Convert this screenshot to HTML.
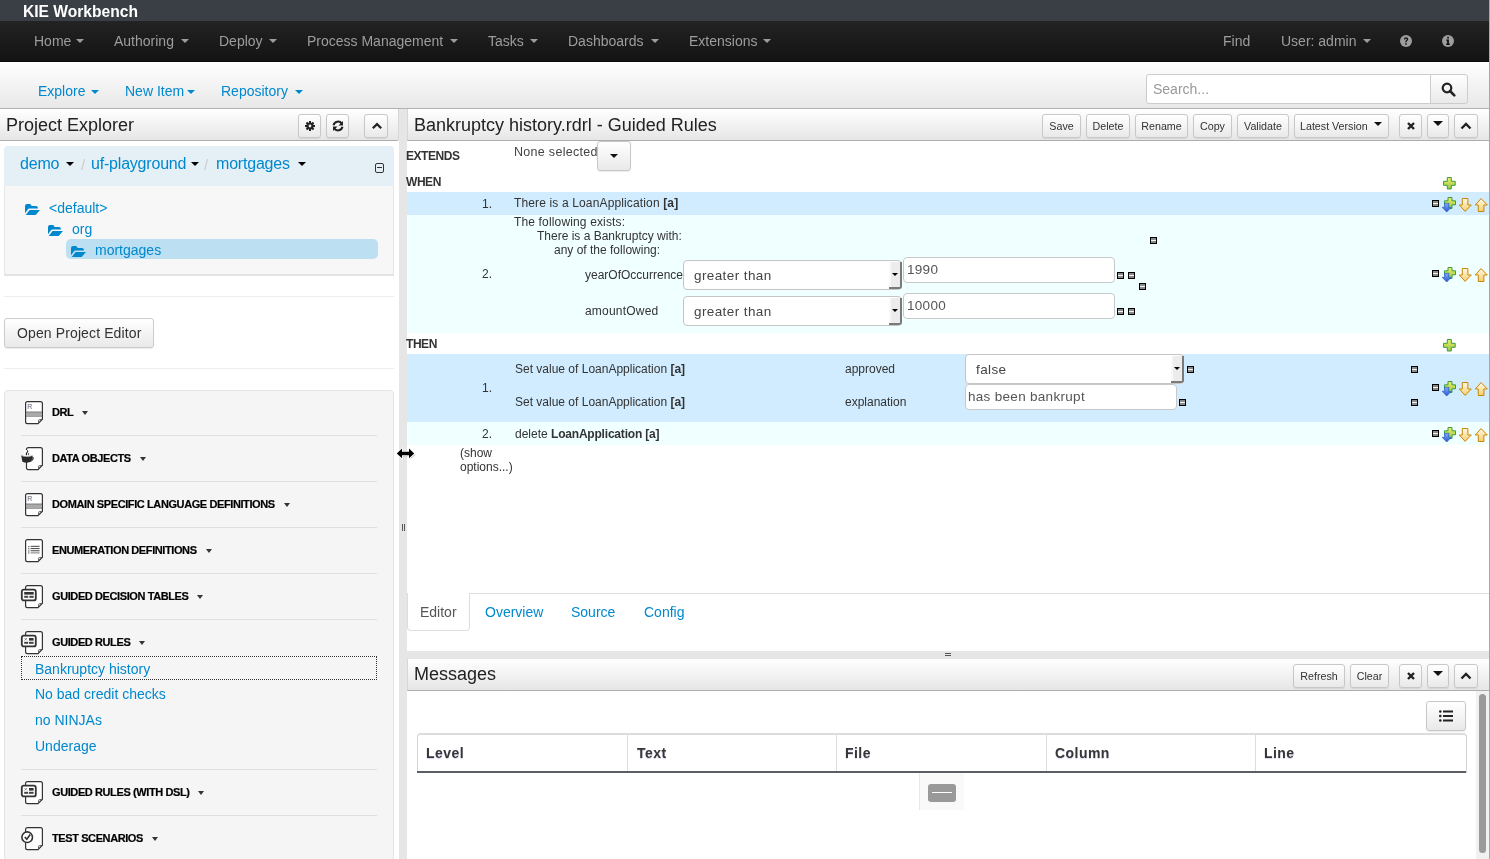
<!DOCTYPE html>
<html><head><meta charset="utf-8">
<style>
*{box-sizing:border-box;margin:0;padding:0}
html,body{width:1490px;height:859px;overflow:hidden;background:#fff;font-family:"Liberation Sans",sans-serif;color:#333}
.a{position:absolute}
.t{position:absolute;line-height:1;white-space:nowrap;will-change:transform}
.btn{position:absolute;border:1px solid #c8c8c8;border-radius:3px;background:linear-gradient(#fff,#e9e9e9);box-shadow:0 1px 1px rgba(0,0,0,.08)}
.rm{position:absolute;width:7px;height:7px;background:#000}
.rm:after{content:"";position:absolute;left:1px;top:1px;width:5px;height:5px;background:linear-gradient(#8a8a8a 0,#8a8a8a 2px,#f4f4f4 2px,#f4f4f4 3px,#8a8a8a 3px)}
</style></head><body>
<div class="a" style="left:0px;top:0px;width:1490px;height:21px;background:#393f45"></div>
<div class="t" style="left:23.00px;top:4.49px;font-size:15.60px;color:#fff;font-weight:bold">KIE Workbench</div>
<div class="a" style="left:0px;top:21px;width:1490px;height:41px;background:linear-gradient(#232323,#131313);border-bottom:1px solid #0a0a0a"></div>
<div class="t" style="left:33.80px;top:34.25px;font-size:14.00px;color:#9d9d9d;">Home</div>
<div class="t" style="left:113.80px;top:34.25px;font-size:14.00px;color:#9d9d9d;">Authoring</div>
<div class="t" style="left:218.80px;top:34.25px;font-size:14.00px;color:#9d9d9d;">Deploy</div>
<div class="t" style="left:306.80px;top:34.25px;font-size:14.00px;color:#9d9d9d;">Process Management</div>
<div class="t" style="left:487.80px;top:34.25px;font-size:14.00px;color:#9d9d9d;">Tasks</div>
<div class="t" style="left:567.80px;top:34.25px;font-size:14.00px;color:#9d9d9d;">Dashboards</div>
<div class="t" style="left:688.80px;top:34.25px;font-size:14.00px;color:#9d9d9d;">Extensions</div>
<div class="t" style="left:1222.80px;top:34.25px;font-size:14.00px;color:#9d9d9d;">Find</div>
<div class="t" style="left:1280.80px;top:34.25px;font-size:14.00px;color:#9d9d9d;">User: admin</div>
<div class="a" style="left:76px;top:39px;width:0;height:0;border-top:4px solid #9d9d9d;border-left:4.0px solid transparent;border-right:4.0px solid transparent"></div>
<div class="a" style="left:181px;top:39px;width:0;height:0;border-top:4px solid #9d9d9d;border-left:4.0px solid transparent;border-right:4.0px solid transparent"></div>
<div class="a" style="left:269px;top:39px;width:0;height:0;border-top:4px solid #9d9d9d;border-left:4.0px solid transparent;border-right:4.0px solid transparent"></div>
<div class="a" style="left:450px;top:39px;width:0;height:0;border-top:4px solid #9d9d9d;border-left:4.0px solid transparent;border-right:4.0px solid transparent"></div>
<div class="a" style="left:530px;top:39px;width:0;height:0;border-top:4px solid #9d9d9d;border-left:4.0px solid transparent;border-right:4.0px solid transparent"></div>
<div class="a" style="left:651px;top:39px;width:0;height:0;border-top:4px solid #9d9d9d;border-left:4.0px solid transparent;border-right:4.0px solid transparent"></div>
<div class="a" style="left:762.5px;top:39px;width:0;height:0;border-top:4px solid #9d9d9d;border-left:4.0px solid transparent;border-right:4.0px solid transparent"></div>
<div class="a" style="left:1362.5px;top:39px;width:0;height:0;border-top:4px solid #9d9d9d;border-left:4.0px solid transparent;border-right:4.0px solid transparent"></div>
<div class="a" style="left:0px;top:62px;width:1490px;height:47px;background:linear-gradient(#fff,#e8e8e8);border-bottom:1px solid #b2b2b2"></div>
<div class="t" style="left:37.70px;top:84.35px;font-size:14.00px;color:#0088ce;">Explore</div>
<div class="t" style="left:124.70px;top:84.35px;font-size:14.00px;color:#0088ce;">New Item</div>
<div class="t" style="left:220.70px;top:84.35px;font-size:14.00px;color:#0088ce;">Repository</div>
<div class="a" style="left:91px;top:90px;width:0;height:0;border-top:4px solid #0088ce;border-left:4.0px solid transparent;border-right:4.0px solid transparent"></div>
<div class="a" style="left:187px;top:90px;width:0;height:0;border-top:4px solid #0088ce;border-left:4.0px solid transparent;border-right:4.0px solid transparent"></div>
<div class="a" style="left:295px;top:90px;width:0;height:0;border-top:4px solid #0088ce;border-left:4.0px solid transparent;border-right:4.0px solid transparent"></div>
<div class="a" style="left:1146px;top:74px;width:285px;height:30px;background:#fff;border:1px solid #ccc;border-radius:3px 0 0 3px"></div>
<div class="t" style="left:1153.00px;top:82.05px;font-size:14.00px;color:#999;">Search...</div>
<div class="a" style="left:1430px;top:74px;width:38px;height:30px;background:linear-gradient(#fff,#e9e9e9);border:1px solid #ccc;border-radius:0 3px 3px 0"></div>
<svg class="a" style="left:1441px;top:82px" width="15" height="15" viewBox="0 0 15 15"><circle cx="6" cy="6" r="4.3" fill="none" stroke="#222" stroke-width="2.2"/><path d="M9 9 L13.3 13.3" stroke="#222" stroke-width="2.6" stroke-linecap="round"/></svg>
<svg class="a" style="left:1399px;top:34px" width="14" height="14" viewBox="0 0 14 14"><circle cx="7" cy="7" r="6" fill="#9d9d9d"/><path d="M4.9 5.4 Q4.9 3.3 7 3.3 Q9.2 3.3 9.2 5.2 Q9.2 6.3 8 7 Q7.6 7.3 7.6 8.3 L6.3 8.3 Q6.3 6.8 7.1 6.2 Q7.8 5.7 7.8 5.2 Q7.8 4.5 7 4.5 Q6.2 4.5 6.2 5.4 Z" fill="#111"/><rect x="6.2" y="9.2" width="1.5" height="1.5" fill="#111"/></svg>
<svg class="a" style="left:1441px;top:34px" width="14" height="14" viewBox="0 0 14 14"><circle cx="7" cy="7" r="6" fill="#9d9d9d"/><rect x="6.2" y="2.8" width="1.7" height="1.7" fill="#111"/><path d="M5.2 5.5 H7.9 V9.6 H8.8 V10.9 H5.2 V9.6 H6.1 V6.8 H5.2 Z" fill="#111"/></svg>
<div class="a" style="left:0px;top:109px;width:399px;height:32px;background:linear-gradient(#fff,#e6e6e6);border-bottom:1px solid #adadad;border-right:1px solid #d6d6d6;border-radius:0 0 2px 0"></div>
<div class="t" style="left:5.50px;top:115.96px;font-size:18.00px;color:#222;">Project Explorer</div>
<div class="btn" style="left:298px;top:114px;width:23px;height:24px;"></div>
<svg class="a" style="left:303px;top:119px" width="14" height="14" viewBox="0 0 14 14"><g fill="#222"><circle cx="7" cy="7" r="3.6"/><rect x="6" y="2" width="2" height="10"/><rect x="2" y="6" width="10" height="2"/><rect x="6" y="2" width="2" height="10" transform="rotate(45 7 7)"/><rect x="6" y="2" width="2" height="10" transform="rotate(-45 7 7)"/></g><circle cx="7" cy="7" r="1.4" fill="#eee"/></svg>
<div class="btn" style="left:326px;top:114px;width:23px;height:24px;"></div>
<svg class="a" style="left:331px;top:119px" width="14" height="14" viewBox="0 0 14 14"><g fill="none" stroke="#222" stroke-width="2"><path d="M2.5 6.2 A4.6 4.6 0 0 1 10.8 4.6"/><path d="M11.5 7.8 A4.6 4.6 0 0 1 3.2 9.4"/></g><path d="M12 2 L12 6.5 L7.5 6.5 Z" fill="#222"/><path d="M2 12 L2 7.5 L6.5 7.5 Z" fill="#222"/></svg>
<div class="btn" style="left:364px;top:114px;width:24px;height:24px;"></div>
<svg class="a" style="left:370.5px;top:121px" width="12" height="10" viewBox="0 0 12 10"><path d="M1.8 7.3 L6 3.1 L10.2 7.3" fill="none" stroke="#222" stroke-width="2.2"/></svg>
<div class="a" style="left:4px;top:146px;width:390px;height:40px;background:#e4eff6;border-radius:4px 4px 0 0"></div>
<div class="t" style="left:19.80px;top:156.26px;font-size:16.00px;color:#0088ce;letter-spacing:-0.2px">demo</div>
<div class="t" style="left:91.00px;top:156.26px;font-size:16.00px;color:#0088ce;letter-spacing:-0.2px">uf-playground</div>
<div class="t" style="left:216.00px;top:156.26px;font-size:16.00px;color:#0088ce;letter-spacing:-0.2px">mortgages</div>
<div class="a" style="left:65.5px;top:161.7px;width:0;height:0;border-top:4.5px solid #000;border-left:4.5px solid transparent;border-right:4.5px solid transparent"></div>
<div class="a" style="left:190.5px;top:161.7px;width:0;height:0;border-top:4.5px solid #000;border-left:4.5px solid transparent;border-right:4.5px solid transparent"></div>
<div class="a" style="left:297.5px;top:161.7px;width:0;height:0;border-top:4.5px solid #000;border-left:4.5px solid transparent;border-right:4.5px solid transparent"></div>
<div class="t" style="left:81.00px;top:157.10px;font-size:15.00px;color:#ccc;">/</div>
<div class="t" style="left:204.00px;top:157.10px;font-size:15.00px;color:#ccc;">/</div>
<div class="a" style="left:375px;top:162.5px;width:9px;height:10px;border:1.3px solid #333;border-radius:2px"></div>
<div class="a" style="left:377px;top:167px;width:5px;height:1.4px;background:#333"></div>
<div class="a" style="left:4px;top:186px;width:390px;height:90px;background:#f7f7f7;border:1px solid #e6e6e6;border-top:none;border-bottom:2px solid #e3e3e3"></div>
<div class="a" style="left:66px;top:239px;width:312px;height:20px;background:#bcdff1;border-radius:5px"></div>
<svg class="a" style="left:24px;top:203px" width="17" height="13" viewBox="0 0 17 13"><path d="M1 3 Q1 1 3 1 L5.6 1 Q6.6 1 7.1 2 L7.6 3 L12 3 Q13.9 3 13.9 5 L13.9 5.6 L5.2 5.6 Q4.5 5.6 4 6.3 L1 10.2 Z" fill="#0088ce"/><path d="M5.6 7 L16 7 L11.6 12 L1.7 12 Z" fill="#0088ce"/></svg>
<svg class="a" style="left:47px;top:224px" width="17" height="13" viewBox="0 0 17 13"><path d="M1 3 Q1 1 3 1 L5.6 1 Q6.6 1 7.1 2 L7.6 3 L12 3 Q13.9 3 13.9 5 L13.9 5.6 L5.2 5.6 Q4.5 5.6 4 6.3 L1 10.2 Z" fill="#0088ce"/><path d="M5.6 7 L16 7 L11.6 12 L1.7 12 Z" fill="#0088ce"/></svg>
<svg class="a" style="left:70px;top:245px" width="17" height="13" viewBox="0 0 17 13"><path d="M1 3 Q1 1 3 1 L5.6 1 Q6.6 1 7.1 2 L7.6 3 L12 3 Q13.9 3 13.9 5 L13.9 5.6 L5.2 5.6 Q4.5 5.6 4 6.3 L1 10.2 Z" fill="#0088ce"/><path d="M5.6 7 L16 7 L11.6 12 L1.7 12 Z" fill="#0088ce"/></svg>
<div class="t" style="left:49.00px;top:201.15px;font-size:14.00px;color:#0088ce;">&lt;default&gt;</div>
<div class="t" style="left:72.00px;top:222.15px;font-size:14.00px;color:#0088ce;">org</div>
<div class="t" style="left:95.00px;top:243.15px;font-size:14.00px;color:#0088ce;">mortgages</div>
<div class="a" style="left:4px;top:296px;width:390px;height:1px;background:#eee"></div>
<div class="btn" style="left:4px;top:318px;width:150px;height:30px;border-color:#ccc"></div>
<div class="t" style="left:17.00px;top:326.35px;font-size:14.00px;color:#333;letter-spacing:0.12px">Open Project Editor</div>
<div class="a" style="left:4px;top:368px;width:390px;height:1px;background:#eee"></div>
<div class="a" style="left:4px;top:390px;width:390px;height:471px;background:#f5f5f5;border:1px solid #e3e3e3;border-radius:4px"></div>
<svg class="a" style="left:20px;top:400.6px" width="25" height="25" viewBox="0 0 25 25"><path d="M7.5 0.6 H20.5 Q22.4 0.6 22.4 2.5 V18.2 L18 22.6 H7.5 Q5.6 22.6 5.6 20.7 V2.5 Q5.6 0.6 7.5 0.6 Z" fill="#fff" stroke="#333" stroke-width="1.2"/><path d="M22 18.6 H19.6 Q18.6 18.6 18.6 19.6 V22" fill="none" stroke="#555" stroke-width="1"/><text x="7.2" y="7.6" font-size="7" font-family="Liberation Sans" fill="#666">R</text><rect x="6" y="10.6" width="16" height="1.1" fill="#666"/><rect x="6" y="12" width="16" height="2.2" fill="#aaa"/><rect x="6" y="14.5" width="16" height="1.1" fill="#666"/></svg>
<div class="t" style="left:52px;top:406.99px;font-size:11px;font-weight:bold;color:#000;letter-spacing:-0.4px;-webkit-text-stroke:0.2px #000">DRL<span style="display:inline-block;vertical-align:middle;margin-left:9px;position:relative;top:-0.5px;width:0;height:0;border-top:4px solid #333;border-left:3.7px solid transparent;border-right:3.7px solid transparent"></span></div>
<svg class="a" style="left:20px;top:446.6px" width="25" height="25" viewBox="0 0 25 25"><path d="M8 0.6 H20.5 Q22.4 0.6 22.4 2.5 V18.2 L18 22.6 H8.4 Q6.5 22.6 6.5 20.7 V2.5 Q6.5 0.6 8.4 0.6 Z" fill="#fff" stroke="#333" stroke-width="1.2"/><path d="M22 18.6 H19.6 Q18.6 18.6 18.6 19.6 V22" fill="none" stroke="#555" stroke-width="1"/><rect x="4" y="3" width="4" height="6" fill="#fff"/><path d="M1.2 8.6 Q7 10.2 12.6 8.4 L11.6 14.6 Q7 16.6 2.4 14.8 Z" fill="#2a2a2a"/><path d="M2.5 9 Q7 10 11.5 8.8" fill="none" stroke="#ddd" stroke-width="0.8"/><path d="M12.2 10 Q14.2 11 12 13.2" fill="none" stroke="#2a2a2a" stroke-width="1.3"/><path d="M6.8 8.2 Q5.6 7 7 5.6 Q8.2 4.6 7.4 3.4" fill="none" stroke="#222" stroke-width="1.1"/><path d="M8.8 8.2 Q7.8 7.3 8.8 6.2" fill="none" stroke="#222" stroke-width="0.9"/></svg>
<div class="t" style="left:52px;top:452.99px;font-size:11px;font-weight:bold;color:#000;letter-spacing:-0.4px;-webkit-text-stroke:0.2px #000">DATA OBJECTS<span style="display:inline-block;vertical-align:middle;margin-left:9px;position:relative;top:-0.5px;width:0;height:0;border-top:4px solid #333;border-left:3.7px solid transparent;border-right:3.7px solid transparent"></span></div>
<svg class="a" style="left:20px;top:492.6px" width="25" height="25" viewBox="0 0 25 25"><path d="M7.5 0.6 H20.5 Q22.4 0.6 22.4 2.5 V18.2 L18 22.6 H7.5 Q5.6 22.6 5.6 20.7 V2.5 Q5.6 0.6 7.5 0.6 Z" fill="#fff" stroke="#333" stroke-width="1.2"/><path d="M22 18.6 H19.6 Q18.6 18.6 18.6 19.6 V22" fill="none" stroke="#555" stroke-width="1"/><text x="7.2" y="7.6" font-size="7" font-family="Liberation Sans" fill="#666">R</text><rect x="6" y="10.6" width="16" height="1.1" fill="#666"/><rect x="6" y="12" width="16" height="2.2" fill="#aaa"/><rect x="6" y="14.5" width="16" height="1.1" fill="#666"/></svg>
<div class="t" style="left:52px;top:498.99px;font-size:11px;font-weight:bold;color:#000;letter-spacing:-0.4px;-webkit-text-stroke:0.2px #000">DOMAIN SPECIFIC LANGUAGE DEFINITIONS<span style="display:inline-block;vertical-align:middle;margin-left:9px;position:relative;top:-0.5px;width:0;height:0;border-top:4px solid #333;border-left:3.7px solid transparent;border-right:3.7px solid transparent"></span></div>
<svg class="a" style="left:20px;top:538.6px" width="25" height="25" viewBox="0 0 25 25"><path d="M7.5 0.6 H20.5 Q22.4 0.6 22.4 2.5 V18.2 L18 22.6 H7.5 Q5.6 22.6 5.6 20.7 V2.5 Q5.6 0.6 7.5 0.6 Z" fill="#fff" stroke="#333" stroke-width="1.2"/><path d="M22 18.6 H19.6 Q18.6 18.6 18.6 19.6 V22" fill="none" stroke="#555" stroke-width="1"/><g fill="#555"><rect x="8.2" y="7" width="1.2" height="1.2"/><rect x="8.2" y="9.2" width="1.2" height="1.2"/><rect x="8.2" y="11.4" width="1.2" height="1.2"/><rect x="8.2" y="13.4" width="1.2" height="1.2"/><rect x="10.6" y="6.8" width="9" height="1.1"/><rect x="10.6" y="9" width="9" height="1.1"/><rect x="10.6" y="11.2" width="9" height="1.1"/></g><rect x="10.6" y="13.2" width="9" height="1.3" fill="#999"/></svg>
<div class="t" style="left:52px;top:544.99px;font-size:11px;font-weight:bold;color:#000;letter-spacing:-0.4px;-webkit-text-stroke:0.2px #000">ENUMERATION DEFINITIONS<span style="display:inline-block;vertical-align:middle;margin-left:9px;position:relative;top:-0.5px;width:0;height:0;border-top:4px solid #333;border-left:3.7px solid transparent;border-right:3.7px solid transparent"></span></div>
<svg class="a" style="left:20px;top:584.6px" width="25" height="25" viewBox="0 0 25 25"><path d="M7.5 0.6 H20.5 Q22.4 0.6 22.4 2.5 V18.2 L18 22.6 H7.5 Q5.6 22.6 5.6 20.7 V2.5 Q5.6 0.6 7.5 0.6 Z" fill="#fff" stroke="#333" stroke-width="1.2"/><path d="M22 18.6 H19.6 Q18.6 18.6 18.6 19.6 V22" fill="none" stroke="#555" stroke-width="1"/><rect x="1.8" y="4.6" width="14" height="10.8" rx="2" fill="#fff" stroke="#333" stroke-width="1.8"/><rect x="4.2" y="7" width="9.5" height="2.6" fill="#333"/><rect x="4.2" y="10.8" width="4" height="2" fill="#444"/><rect x="9.4" y="10.8" width="4.3" height="2" fill="#444"/></svg>
<div class="t" style="left:52px;top:590.99px;font-size:11px;font-weight:bold;color:#000;letter-spacing:-0.4px;-webkit-text-stroke:0.2px #000">GUIDED DECISION TABLES<span style="display:inline-block;vertical-align:middle;margin-left:9px;position:relative;top:-0.5px;width:0;height:0;border-top:4px solid #333;border-left:3.7px solid transparent;border-right:3.7px solid transparent"></span></div>
<svg class="a" style="left:20px;top:630.6px" width="25" height="25" viewBox="0 0 25 25"><path d="M7.5 0.6 H20.5 Q22.4 0.6 22.4 2.5 V18.2 L18 22.6 H7.5 Q5.6 22.6 5.6 20.7 V2.5 Q5.6 0.6 7.5 0.6 Z" fill="#fff" stroke="#333" stroke-width="1.2"/><path d="M22 18.6 H19.6 Q18.6 18.6 18.6 19.6 V22" fill="none" stroke="#555" stroke-width="1"/><rect x="1.8" y="4.6" width="14" height="10.8" rx="2" fill="#fff" stroke="#333" stroke-width="1.8"/><path d="M4.5 7 L7 9.5 M7 7 L4.5 9.5" stroke="#777" stroke-width="0.8"/><rect x="9" y="7" width="4.6" height="2.6" fill="#333"/><rect x="4.2" y="10.8" width="4" height="2" fill="#444"/><rect x="9" y="10.8" width="4.6" height="2" fill="#444"/></svg>
<div class="t" style="left:52px;top:636.99px;font-size:11px;font-weight:bold;color:#000;letter-spacing:-0.4px;-webkit-text-stroke:0.2px #000">GUIDED RULES<span style="display:inline-block;vertical-align:middle;margin-left:9px;position:relative;top:-0.5px;width:0;height:0;border-top:4px solid #333;border-left:3.7px solid transparent;border-right:3.7px solid transparent"></span></div>
<svg class="a" style="left:20px;top:781.1px" width="25" height="25" viewBox="0 0 25 25"><path d="M7.5 0.6 H20.5 Q22.4 0.6 22.4 2.5 V18.2 L18 22.6 H7.5 Q5.6 22.6 5.6 20.7 V2.5 Q5.6 0.6 7.5 0.6 Z" fill="#fff" stroke="#333" stroke-width="1.2"/><path d="M22 18.6 H19.6 Q18.6 18.6 18.6 19.6 V22" fill="none" stroke="#555" stroke-width="1"/><rect x="1.8" y="4.6" width="14" height="10.8" rx="2" fill="#fff" stroke="#333" stroke-width="1.8"/><path d="M4.5 7 L7 9.5 M7 7 L4.5 9.5" stroke="#777" stroke-width="0.8"/><rect x="9" y="7" width="4.6" height="2.6" fill="#333"/><rect x="4.2" y="10.8" width="4" height="2" fill="#444"/><rect x="9" y="10.8" width="4.6" height="2" fill="#444"/></svg>
<div class="t" style="left:52px;top:787.49px;font-size:11px;font-weight:bold;color:#000;letter-spacing:-0.4px;-webkit-text-stroke:0.2px #000">GUIDED RULES (WITH DSL)<span style="display:inline-block;vertical-align:middle;margin-left:9px;position:relative;top:-0.5px;width:0;height:0;border-top:4px solid #333;border-left:3.7px solid transparent;border-right:3.7px solid transparent"></span></div>
<svg class="a" style="left:20px;top:826.6px" width="25" height="25" viewBox="0 0 25 25"><path d="M7.5 0.6 H20.5 Q22.4 0.6 22.4 2.5 V18.2 L18 22.6 H7.5 Q5.6 22.6 5.6 20.7 V2.5 Q5.6 0.6 7.5 0.6 Z" fill="#fff" stroke="#333" stroke-width="1.2"/><path d="M22 18.6 H19.6 Q18.6 18.6 18.6 19.6 V22" fill="none" stroke="#555" stroke-width="1"/><circle cx="7.2" cy="10.2" r="5.3" fill="#fff" stroke="#333" stroke-width="1.6"/><path d="M4.8 10 L6.8 12.3 L10.2 7.5" fill="none" stroke="#333" stroke-width="1.6"/></svg>
<div class="t" style="left:52px;top:832.99px;font-size:11px;font-weight:bold;color:#000;letter-spacing:-0.4px;-webkit-text-stroke:0.2px #000">TEST SCENARIOS<span style="display:inline-block;vertical-align:middle;margin-left:9px;position:relative;top:-0.5px;width:0;height:0;border-top:4px solid #333;border-left:3.7px solid transparent;border-right:3.7px solid transparent"></span></div>
<div class="a" style="left:21px;top:435px;width:356px;height:1px;background:#e0e0e0"></div>
<div class="a" style="left:21px;top:481px;width:356px;height:1px;background:#e0e0e0"></div>
<div class="a" style="left:21px;top:527px;width:356px;height:1px;background:#e0e0e0"></div>
<div class="a" style="left:21px;top:573px;width:356px;height:1px;background:#e0e0e0"></div>
<div class="a" style="left:21px;top:619px;width:356px;height:1px;background:#e0e0e0"></div>
<div class="a" style="left:21px;top:769px;width:356px;height:1px;background:#e0e0e0"></div>
<div class="a" style="left:21px;top:815px;width:356px;height:1px;background:#e0e0e0"></div>
<div class="a" style="left:21px;top:656px;width:356px;height:24px;border:1px dotted #333"></div>
<div class="t" style="left:34.50px;top:661.65px;font-size:14.00px;color:#0088ce;">Bankruptcy history</div>
<div class="t" style="left:34.50px;top:687.45px;font-size:14.00px;color:#0088ce;">No bad credit checks</div>
<div class="t" style="left:34.50px;top:713.15px;font-size:14.00px;color:#0088ce;">no NINJAs</div>
<div class="t" style="left:34.50px;top:739.15px;font-size:14.00px;color:#0088ce;">Underage</div>
<div class="a" style="left:399px;top:109px;width:8px;height:750px;background:#e6e6e6"></div>
<div class="a" style="left:402px;top:524px;width:1px;height:7px;background:#555"></div>
<div class="a" style="left:404px;top:524px;width:1px;height:7px;background:#555"></div>
<div class="a" style="left:407px;top:109px;width:1083px;height:32px;background:linear-gradient(#fff,#e6e6e6);border-bottom:1px solid #adadad;border-left:1px solid #d6d6d6"></div>
<div class="t" style="left:413.50px;top:115.96px;font-size:18.00px;color:#222;">Bankruptcy history.rdrl - Guided Rules</div>
<div class="btn" style="left:1042px;top:114px;width:39px;height:24px;"></div>
<div class="t" style="left:1042px;top:120.94px;width:39px;text-align:center;font-size:10.7px;color:#333">Save</div>
<div class="btn" style="left:1086px;top:114px;width:44px;height:24px;"></div>
<div class="t" style="left:1086px;top:120.94px;width:44px;text-align:center;font-size:10.7px;color:#333">Delete</div>
<div class="btn" style="left:1135px;top:114px;width:53px;height:24px;"></div>
<div class="t" style="left:1135px;top:120.94px;width:53px;text-align:center;font-size:10.7px;color:#333">Rename</div>
<div class="btn" style="left:1193px;top:114px;width:39px;height:24px;"></div>
<div class="t" style="left:1193px;top:120.94px;width:39px;text-align:center;font-size:10.7px;color:#333">Copy</div>
<div class="btn" style="left:1237px;top:114px;width:52px;height:24px;"></div>
<div class="t" style="left:1237px;top:120.94px;width:52px;text-align:center;font-size:10.7px;color:#333">Validate</div>
<div class="btn" style="left:1294px;top:114px;width:95px;height:24px;"></div>
<div class="t" style="left:1299.50px;top:120.94px;font-size:10.70px;color:#333;">Latest Version</div>
<div class="a" style="left:1374px;top:121.5px;width:0;height:0;border-top:4px solid #111;border-left:4.0px solid transparent;border-right:4.0px solid transparent"></div>
<div class="btn" style="left:1399px;top:114px;width:23px;height:24px;"></div>
<div class="btn" style="left:1427px;top:114px;width:22px;height:24px;"></div>
<div class="btn" style="left:1454px;top:114px;width:24px;height:24px;"></div>
<svg class="a" style="left:1405px;top:120px" width="12" height="12" viewBox="0 0 12 12"><path d="M3 3 L9 9 M9 3 L3 9" stroke="#222" stroke-width="2.4"/></svg>
<div class="a" style="left:1433px;top:121px;width:0;height:0;border-top:5px solid #111;border-left:5.0px solid transparent;border-right:5.0px solid transparent"></div>
<svg class="a" style="left:1460px;top:121px" width="12" height="10" viewBox="0 0 12 10"><path d="M1.5 7.5 L6 3 L10.5 7.5" fill="none" stroke="#222" stroke-width="2.4"/></svg>
<div class="t" style="left:405.90px;top:149.94px;font-size:12.00px;color:#333;font-weight:bold;letter-spacing:-0.45px">EXTENDS</div>
<div class="t" style="left:406.10px;top:175.84px;font-size:12.00px;color:#333;font-weight:bold;letter-spacing:-0.45px">WHEN</div>
<div class="t" style="left:406.10px;top:338.04px;font-size:12.00px;color:#333;font-weight:bold;letter-spacing:-0.45px">THEN</div>
<div class="t" style="left:514.00px;top:146.02px;font-size:12.50px;color:#444;letter-spacing:0.3px">None selected</div>
<div class="btn" style="left:597px;top:141px;width:34px;height:30px;"></div>
<div class="a" style="left:610px;top:154px;width:0;height:0;border-top:4px solid #111;border-left:4.0px solid transparent;border-right:4.0px solid transparent"></div>
<div class="a" style="left:407px;top:192px;width:1082px;height:23px;background:#d0ecfe"></div>
<div class="a" style="left:407px;top:215px;width:1082px;height:118px;background:#f0ffff"></div>
<div class="a" style="left:407px;top:354px;width:1082px;height:68px;background:#d0ecfe"></div>
<div class="a" style="left:407px;top:422px;width:1082px;height:23px;background:#f0ffff"></div>
<div class="t" style="left:482.00px;top:197.54px;font-size:12.00px;color:#333;">1.</div>
<div class="t" style="left:514.00px;top:197.24px;font-size:12.00px;color:#333;letter-spacing:0.14px">There is a LoanApplication <b>[a]</b></div>
<div class="t" style="left:514.00px;top:215.74px;font-size:12.00px;color:#333;letter-spacing:0.15px">The following exists:</div>
<div class="t" style="left:537.00px;top:229.84px;font-size:12.00px;color:#333;">There is a Bankruptcy with:</div>
<div class="t" style="left:553.50px;top:243.84px;font-size:12.00px;color:#333;">any of the following:</div>
<div class="t" style="left:482.00px;top:268.04px;font-size:12.00px;color:#333;">2.</div>
<div class="t" style="left:584.50px;top:268.64px;font-size:12.00px;color:#333;">yearOfOccurrence</div>
<div class="t" style="left:585.00px;top:304.84px;font-size:12.00px;color:#333;letter-spacing:0.2px">amountOwed</div>
<div class="a" style="left:683px;top:260px;width:219px;height:30px;background:#fff;border:1px solid #c4c4c4;border-radius:4px"></div>
<div class="a" style="left:889px;top:262px;width:13px;height:27px;background:linear-gradient(90deg,#f8f8f8 0,#f8f8f8 2px,#ececec 2px);border-right:2px solid #7a7a7a;border-bottom:2px solid #7a7a7a;border-radius:0 0 3px 0"></div>
<div class="a" style="left:892.2px;top:272.8px;width:0;height:0;border-top:3.8px solid #000;border-left:3.1px solid transparent;border-right:3.1px solid transparent"></div>
<div class="t" style="left:693.50px;top:268.57px;font-size:13.50px;color:#444;letter-spacing:0.4px">greater than</div>
<div class="a" style="left:683px;top:296px;width:219px;height:30px;background:#fff;border:1px solid #c4c4c4;border-radius:4px"></div>
<div class="a" style="left:889px;top:298px;width:13px;height:27px;background:linear-gradient(90deg,#f8f8f8 0,#f8f8f8 2px,#ececec 2px);border-right:2px solid #7a7a7a;border-bottom:2px solid #7a7a7a;border-radius:0 0 3px 0"></div>
<div class="a" style="left:892.2px;top:308.8px;width:0;height:0;border-top:3.8px solid #000;border-left:3.1px solid transparent;border-right:3.1px solid transparent"></div>
<div class="t" style="left:693.50px;top:304.57px;font-size:13.50px;color:#444;letter-spacing:0.4px">greater than</div>
<div class="a" style="left:903px;top:257px;width:212px;height:26px;background:#fff;border:1px solid #c8c8c8;border-radius:4px"></div>
<div class="t" style="left:907.00px;top:263.37px;font-size:13.50px;color:#555;letter-spacing:0.3px">1990</div>
<div class="a" style="left:903px;top:293px;width:212px;height:26px;background:#fff;border:1px solid #c8c8c8;border-radius:4px"></div>
<div class="t" style="left:907.00px;top:299.37px;font-size:13.50px;color:#555;letter-spacing:0.3px">10000</div>
<div class="rm" style="left:1150px;top:237px"></div>
<div class="rm" style="left:1117px;top:272px"></div>
<div class="rm" style="left:1128px;top:272px"></div>
<div class="rm" style="left:1139px;top:283px"></div>
<div class="rm" style="left:1117px;top:308px"></div>
<div class="rm" style="left:1128px;top:308px"></div>
<div class="rm" style="left:1187px;top:366px"></div>
<div class="rm" style="left:1179px;top:399px"></div>
<div class="rm" style="left:1411px;top:366px"></div>
<div class="rm" style="left:1411px;top:399px"></div>
<div class="rm" style="left:1432px;top:200px"></div>
<div class="rm" style="left:1432px;top:270px"></div>
<div class="rm" style="left:1432px;top:384px"></div>
<div class="rm" style="left:1432px;top:430px"></div>
<div class="a" style="left:965px;top:354px;width:219px;height:30px;background:#fff;border:1px solid #c4c4c4;border-radius:4px"></div>
<div class="a" style="left:1171px;top:356px;width:13px;height:27px;background:linear-gradient(90deg,#f8f8f8 0,#f8f8f8 2px,#ececec 2px);border-right:2px solid #7a7a7a;border-bottom:2px solid #7a7a7a;border-radius:0 0 3px 0"></div>
<div class="a" style="left:1174.2px;top:366.8px;width:0;height:0;border-top:3.8px solid #000;border-left:3.1px solid transparent;border-right:3.1px solid transparent"></div>
<div class="t" style="left:975.50px;top:362.57px;font-size:13.50px;color:#444;letter-spacing:0.4px">false</div>
<div class="a" style="left:965px;top:384px;width:212px;height:26px;background:#fff;border:1px solid #c8c8c8;border-radius:4px"></div>
<div class="t" style="left:968.00px;top:390.17px;font-size:13.50px;color:#555;letter-spacing:0.3px">has been bankrupt</div>
<div class="t" style="left:482.00px;top:381.84px;font-size:12.00px;color:#333;">1.</div>
<div class="t" style="left:514.50px;top:362.54px;font-size:12.00px;color:#333;">Set value of LoanApplication <b>[a]</b></div>
<div class="t" style="left:514.50px;top:395.84px;font-size:12.00px;color:#333;">Set value of LoanApplication <b>[a]</b></div>
<div class="t" style="left:844.50px;top:362.84px;font-size:12.00px;color:#333;">approved</div>
<div class="t" style="left:844.50px;top:395.64px;font-size:12.00px;color:#333;">explanation</div>
<div class="t" style="left:482.00px;top:427.54px;font-size:12.00px;color:#333;">2.</div>
<div class="t" style="left:514.50px;top:427.54px;font-size:12.00px;color:#333;">delete <b style="letter-spacing:-0.2px">LoanApplication [a]</b></div>
<div class="t" style="left:460.30px;top:446.84px;font-size:12.00px;color:#333;">(show</div>
<div class="t" style="left:460.30px;top:460.64px;font-size:12.00px;color:#333;">options...)</div>
<svg class="a" style="left:1443px;top:177px" width="13" height="13" viewBox="0 0 13 13"><path d="M4.3 0.5 H8.3 V4.3 H12.2 V8.3 H8.3 V12 H4.3 V8.3 H0.5 V4.3 H4.3 Z" fill="url(#gp)" stroke="#3c9a48" stroke-width="1"/></svg>
<svg class="a" style="left:1443px;top:339px" width="13" height="13" viewBox="0 0 13 13"><path d="M4.3 0.5 H8.3 V4.3 H12.2 V8.3 H8.3 V12 H4.3 V8.3 H0.5 V4.3 H4.3 Z" fill="url(#gp)" stroke="#3c9a48" stroke-width="1"/></svg>
<svg width="0" height="0" style="position:absolute"><defs><linearGradient id="gp" x1="0" y1="0" x2="0" y2="1"><stop offset="0" stop-color="#eef060"/><stop offset="1" stop-color="#98c848"/></linearGradient><linearGradient id="gb" x1="0" y1="0" x2="0" y2="1"><stop offset="0" stop-color="#80b0f8"/><stop offset="1" stop-color="#2858d0"/></linearGradient><linearGradient id="gy" x1="0" y1="0" x2="0" y2="1"><stop offset="0" stop-color="#fffbea"/><stop offset="1" stop-color="#f6cf68"/></linearGradient><linearGradient id="gy2" x1="0" y1="1" x2="0" y2="0"><stop offset="0" stop-color="#f6cf68"/><stop offset="1" stop-color="#fffbea"/></linearGradient></defs></svg>
<svg class="a" style="left:1442px;top:197px" width="15" height="16" viewBox="0 0 15 16"><path d="M6 0.5 H10 V3.8 H13.5 V7.8 H10 V11.5 H6 V7.8 H2.5 V3.8 H6 Z" fill="url(#gp)" stroke="#3c9a48" stroke-width="1"/><path d="M2.6 6.2 H6.8 V10.3 H9.3 L4.7 15 L0.2 10.3 H2.6 Z" fill="url(#gb)" stroke="#2a58c0" stroke-width="0.7"/></svg>
<svg class="a" style="left:1459px;top:198px" width="13" height="14" viewBox="0 0 13 14"><path d="M3.3 0.5 H8.9 V7 H12.3 L6.1 13.4 L0.3 7 H3.3 Z" fill="url(#gy)" stroke="#c98608" stroke-width="1"/></svg>
<svg class="a" style="left:1475px;top:198px" width="13" height="14" viewBox="0 0 13 14"><path d="M3.3 13.5 H8.9 V7 H12.3 L6.1 0.6 L0.3 7 H3.3 Z" fill="url(#gy2)" stroke="#c98608" stroke-width="1"/></svg>
<svg class="a" style="left:1442px;top:267px" width="15" height="16" viewBox="0 0 15 16"><path d="M6 0.5 H10 V3.8 H13.5 V7.8 H10 V11.5 H6 V7.8 H2.5 V3.8 H6 Z" fill="url(#gp)" stroke="#3c9a48" stroke-width="1"/><path d="M2.6 6.2 H6.8 V10.3 H9.3 L4.7 15 L0.2 10.3 H2.6 Z" fill="url(#gb)" stroke="#2a58c0" stroke-width="0.7"/></svg>
<svg class="a" style="left:1459px;top:268px" width="13" height="14" viewBox="0 0 13 14"><path d="M3.3 0.5 H8.9 V7 H12.3 L6.1 13.4 L0.3 7 H3.3 Z" fill="url(#gy)" stroke="#c98608" stroke-width="1"/></svg>
<svg class="a" style="left:1475px;top:268px" width="13" height="14" viewBox="0 0 13 14"><path d="M3.3 13.5 H8.9 V7 H12.3 L6.1 0.6 L0.3 7 H3.3 Z" fill="url(#gy2)" stroke="#c98608" stroke-width="1"/></svg>
<svg class="a" style="left:1442px;top:381px" width="15" height="16" viewBox="0 0 15 16"><path d="M6 0.5 H10 V3.8 H13.5 V7.8 H10 V11.5 H6 V7.8 H2.5 V3.8 H6 Z" fill="url(#gp)" stroke="#3c9a48" stroke-width="1"/><path d="M2.6 6.2 H6.8 V10.3 H9.3 L4.7 15 L0.2 10.3 H2.6 Z" fill="url(#gb)" stroke="#2a58c0" stroke-width="0.7"/></svg>
<svg class="a" style="left:1459px;top:382px" width="13" height="14" viewBox="0 0 13 14"><path d="M3.3 0.5 H8.9 V7 H12.3 L6.1 13.4 L0.3 7 H3.3 Z" fill="url(#gy)" stroke="#c98608" stroke-width="1"/></svg>
<svg class="a" style="left:1475px;top:382px" width="13" height="14" viewBox="0 0 13 14"><path d="M3.3 13.5 H8.9 V7 H12.3 L6.1 0.6 L0.3 7 H3.3 Z" fill="url(#gy2)" stroke="#c98608" stroke-width="1"/></svg>
<svg class="a" style="left:1442px;top:427px" width="15" height="16" viewBox="0 0 15 16"><path d="M6 0.5 H10 V3.8 H13.5 V7.8 H10 V11.5 H6 V7.8 H2.5 V3.8 H6 Z" fill="url(#gp)" stroke="#3c9a48" stroke-width="1"/><path d="M2.6 6.2 H6.8 V10.3 H9.3 L4.7 15 L0.2 10.3 H2.6 Z" fill="url(#gb)" stroke="#2a58c0" stroke-width="0.7"/></svg>
<svg class="a" style="left:1459px;top:428px" width="13" height="14" viewBox="0 0 13 14"><path d="M3.3 0.5 H8.9 V7 H12.3 L6.1 13.4 L0.3 7 H3.3 Z" fill="url(#gy)" stroke="#c98608" stroke-width="1"/></svg>
<svg class="a" style="left:1475px;top:428px" width="13" height="14" viewBox="0 0 13 14"><path d="M3.3 13.5 H8.9 V7 H12.3 L6.1 0.6 L0.3 7 H3.3 Z" fill="url(#gy2)" stroke="#c98608" stroke-width="1"/></svg>
<svg class="a" style="left:394px;top:446px" width="25" height="16" viewBox="0 0 25 16"><path d="M3.3 7.8 L8.5 3 V6.2 H15.5 V3 L20.7 7.8 L15.5 12.6 V9.6 H8.5 V12.6 Z" fill="#aaa" opacity="0.5" transform="translate(1 1)"/><path d="M2.8 7.4 L8 2.6 V5.8 H15 V2.6 L20.2 7.4 L15 12.2 V9.2 H8 V12.2 Z" fill="#000" stroke="#fff" stroke-width="1.6" paint-order="stroke" stroke-linejoin="miter"/></svg>
<div class="a" style="left:470px;top:593px;width:1019px;height:1px;background:#ddd"></div>
<div class="a" style="left:407px;top:593px;width:63px;height:38px;background:#fff;border:1px solid #ddd;border-top:none;border-radius:0 0 4px 4px"></div>
<div class="t" style="left:420.00px;top:605.15px;font-size:14.00px;color:#555;">Editor</div>
<div class="t" style="left:485.00px;top:605.15px;font-size:14.00px;color:#0088ce;">Overview</div>
<div class="t" style="left:571.00px;top:605.15px;font-size:14.00px;color:#0088ce;">Source</div>
<div class="t" style="left:644.00px;top:605.15px;font-size:14.00px;color:#0088ce;">Config</div>
<div class="a" style="left:407px;top:651px;width:1082px;height:8px;background:#e6e6e6"></div>
<div class="a" style="left:945px;top:653px;width:6px;height:1px;background:#555"></div>
<div class="a" style="left:945px;top:655px;width:6px;height:1px;background:#555"></div>
<div class="a" style="left:407px;top:659px;width:1082px;height:32px;background:linear-gradient(#fff,#e6e6e6);border-bottom:1px solid #adadad;border-left:1px solid #d6d6d6"></div>
<div class="t" style="left:413.50px;top:665.16px;font-size:18.00px;color:#222;">Messages</div>
<div class="btn" style="left:1293px;top:664px;width:52px;height:24px;"></div>
<div class="t" style="left:1293px;top:670.94px;width:52px;text-align:center;font-size:10.7px;color:#333">Refresh</div>
<div class="btn" style="left:1350px;top:664px;width:39px;height:24px;"></div>
<div class="t" style="left:1350px;top:670.94px;width:39px;text-align:center;font-size:10.7px;color:#333">Clear</div>
<div class="btn" style="left:1399px;top:664px;width:23px;height:24px;"></div>
<div class="btn" style="left:1427px;top:664px;width:22px;height:24px;"></div>
<div class="btn" style="left:1454px;top:664px;width:24px;height:24px;"></div>
<svg class="a" style="left:1405px;top:670px" width="12" height="12" viewBox="0 0 12 12"><path d="M3 3 L9 9 M9 3 L3 9" stroke="#222" stroke-width="2.4"/></svg>
<div class="a" style="left:1433px;top:671px;width:0;height:0;border-top:5px solid #111;border-left:5.0px solid transparent;border-right:5.0px solid transparent"></div>
<svg class="a" style="left:1460px;top:671px" width="12" height="10" viewBox="0 0 12 10"><path d="M1.5 7.5 L6 3 L10.5 7.5" fill="none" stroke="#222" stroke-width="2.4"/></svg>
<div class="a" style="left:1476px;top:691px;width:13px;height:168px;background:#f1f1f1"></div>
<div class="a" style="left:1479px;top:694px;width:7px;height:159px;background:#9a9a9a;border-radius:4px"></div>
<div class="btn" style="left:1426px;top:701px;width:40px;height:30px;"></div>
<svg class="a" style="left:1439px;top:710px" width="15" height="12" viewBox="0 0 15 12"><g fill="#222"><circle cx="1.3" cy="1.5" r="1.3"/><circle cx="1.3" cy="6" r="1.3"/><circle cx="1.3" cy="10.5" r="1.3"/><rect x="4" y="0.5" width="10" height="2"/><rect x="4" y="5" width="10" height="2"/><rect x="4" y="9.5" width="10" height="2"/></g></svg>
<div class="a" style="left:417px;top:733px;width:1050px;height:40px;background:#fff;border:1px solid #d4d4d4;border-top:2px solid #dcdcdc;border-bottom:none;border-radius:4px 4px 0 0"></div>
<div class="a" style="left:417px;top:771px;width:1049px;height:2px;background:#5b5e63"></div>
<div class="a" style="left:627px;top:734px;width:1px;height:37px;background:#ddd"></div>
<div class="a" style="left:836px;top:734px;width:1px;height:37px;background:#ddd"></div>
<div class="a" style="left:1046px;top:734px;width:1px;height:37px;background:#ddd"></div>
<div class="a" style="left:1255px;top:734px;width:1px;height:37px;background:#ddd"></div>
<div class="t" style="left:425.50px;top:745.95px;font-size:14.00px;color:#363636;font-weight:bold;letter-spacing:0.45px;text-shadow:0 1px 1px #d4d4f4">Level</div>
<div class="t" style="left:636.50px;top:745.95px;font-size:14.00px;color:#363636;font-weight:bold;letter-spacing:0.45px;text-shadow:0 1px 1px #d4d4f4">Text</div>
<div class="t" style="left:845.00px;top:745.95px;font-size:14.00px;color:#363636;font-weight:bold;letter-spacing:0.45px;text-shadow:0 1px 1px #d4d4f4">File</div>
<div class="t" style="left:1055.00px;top:745.95px;font-size:14.00px;color:#363636;font-weight:bold;letter-spacing:0.45px;text-shadow:0 1px 1px #d4d4f4">Column</div>
<div class="t" style="left:1263.50px;top:745.95px;font-size:14.00px;color:#363636;font-weight:bold;letter-spacing:0.45px;text-shadow:0 1px 1px #d4d4f4">Line</div>
<div class="a" style="left:919px;top:773px;width:45px;height:37px;background:#f9f9f9;border-left:1px solid #e8e8e8"></div>
<div class="a" style="left:928px;top:784px;width:28px;height:18px;background:#999;border-radius:3px"></div>
<div class="a" style="left:932px;top:792px;width:20px;height:1px;background:#fff"></div>
<div class="a" style="left:1489px;top:0px;width:1px;height:859px;background:#a8a8a8"></div>
</body></html>
